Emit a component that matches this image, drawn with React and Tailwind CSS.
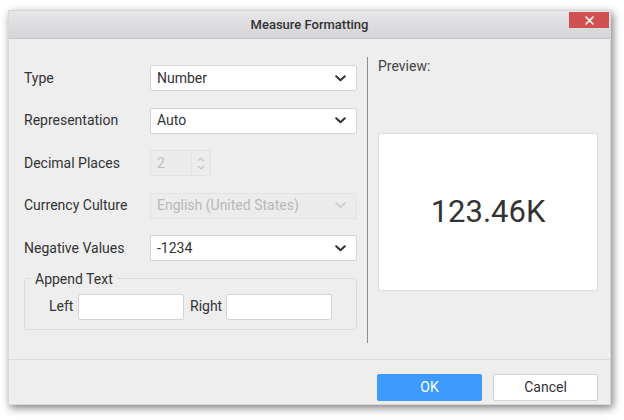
import React from "react";

const Chevron = ({ color = "#333" }) => (
  <svg width="11" height="7" viewBox="0 0 11 7" fill="none">
    <path d="M1.2 1.2 L5.5 5.3 L9.8 1.2" stroke={color} strokeWidth="2" strokeLinecap="round" strokeLinejoin="round" />
  </svg>
);

const Select = ({ value, disabled }) => (
  <div
    className={
      "w-[207px] h-[26px] flex items-center justify-between pl-[6px] pr-[10px] rounded-[2px] border text-[14px] " +
      (disabled
        ? "bg-[#ececec] border-[#e3e3e3] text-[#b8b8b8]"
        : "bg-white border-[#d4d4d4] text-[#333]")
    }
  >
    <span>{value}</span>
    <Chevron color={disabled ? "#d0d0d0" : "#333"} />
  </div>
);

const Row = ({ label, children }) => (
  <div className="flex items-center h-[26px]">
    <div className="w-[126px] text-[14px] text-[#333]">{label}</div>
    {children}
  </div>
);

export default function App() {
  return (
    <div className="w-[624px] h-[420px] bg-white pt-[10px] pl-[8px]" style={{ fontFamily: "Roboto, 'Noto Sans', sans-serif" }}>
      <div className="w-[603px] h-[395px] bg-[#eeeeee] flex flex-col shadow-[2px_3px_8px_rgba(0,0,0,0.5)] border border-[#d8d8d8]">
        {/* header */}
        <div className="h-[28px] grid grid-cols-[42px_1fr_42px] items-start bg-gradient-to-b from-[#e7e6e9] to-[#d4d3d6] border-b border-[#c6c6c8]">
          <div />
          <div className="h-[27px] flex items-center justify-center text-[13px] font-medium text-[#333]">Measure Formatting</div>
          <div className="flex justify-end pr-[1px] pt-[1px]">
            <div className="w-[40px] h-[16px] bg-[#d05151] flex items-center justify-center">
              <svg width="9" height="9" viewBox="0 0 9 9">
                <path d="M1 1 L8 8 M8 1 L1 8" stroke="white" strokeWidth="1.6" strokeLinecap="round" />
              </svg>
            </div>
          </div>
        </div>
        {/* body */}
        <div className="flex flex-1">
          <div className="w-[359px] pl-[15px] pt-[26px] flex flex-col gap-[16.5px]">
            <Row label="Type"><Select value="Number" /></Row>
            <Row label="Representation"><Select value="Auto" /></Row>
            <Row label="Decimal Places">
              <div className="w-[61px] h-[26px] flex rounded-[2px] border border-[#e3e3e3] bg-[#ececec] text-[14px] text-[#c0c0c0]">
                <div className="flex-1 flex items-center pl-[6px]">2</div>
                <div className="w-[19px] border-l border-[#e3e3e3] flex flex-col items-center justify-center gap-[3px]">
                  <svg width="8" height="5" viewBox="0 0 8 5"><path d="M1 4 L4 1 L7 4" stroke="#c4c4c4" strokeWidth="1.2" fill="none" /></svg>
                  <svg width="8" height="5" viewBox="0 0 8 5"><path d="M1 1 L4 4 L7 1" stroke="#c4c4c4" strokeWidth="1.2" fill="none" /></svg>
                </div>
              </div>
            </Row>
            <Row label="Currency Culture"><Select value="English (United States)" disabled /></Row>
            <Row label="Negative Values"><Select value="-1234" /></Row>
            <fieldset className="w-[333px] h-[59px] mt-[-7px] border border-[#dcdcdc] rounded-[3px] p-0">
              <legend className="ml-[6px] px-[4px] text-[14px] text-[#333] leading-[16px]">Append Text</legend>
              <div className="flex items-center text-[14px] text-[#333] mt-[7px] pl-[24px]">
                <span className="w-[29px]">Left</span>
                <div className="w-[106px] h-[26px] bg-white border border-[#d4d4d4] rounded-[2px]" />
                <span className="w-[42px] pl-[6px]">Right</span>
                <div className="w-[106px] h-[26px] bg-white border border-[#d4d4d4] rounded-[2px]" />
              </div>
            </fieldset>
          </div>
          <div className="pt-[18px] pb-[16px] flex">
            <div className="w-[1px] bg-[#8e8e8e]" />
          </div>
          <div className="flex-1 pl-[10px] pr-[12px] pt-[19px]">
            <div className="text-[14px] text-[#444] leading-[16px]">Preview:</div>
            <div className="mt-[59px] w-[220px] h-[158px] bg-white border border-[#dddddd] rounded-[2px] flex items-center justify-center text-[31px] text-[#333]">
              123.46K
            </div>
          </div>
        </div>
        {/* footer */}
        <div className="h-[45px] border-t border-[#dcdcdc] flex items-start justify-end gap-[11px] pr-[12px] pt-[14px]">
          <div className="w-[105px] h-[27px] bg-[#3e9afc] rounded-[2px] flex items-center justify-center text-[14px] text-white">OK</div>
          <div className="w-[105px] h-[27px] bg-white border border-[#d2d2d2] rounded-[2px] flex items-center justify-center text-[14px] text-[#333]">Cancel</div>
        </div>
      </div>
    </div>
  );
}
